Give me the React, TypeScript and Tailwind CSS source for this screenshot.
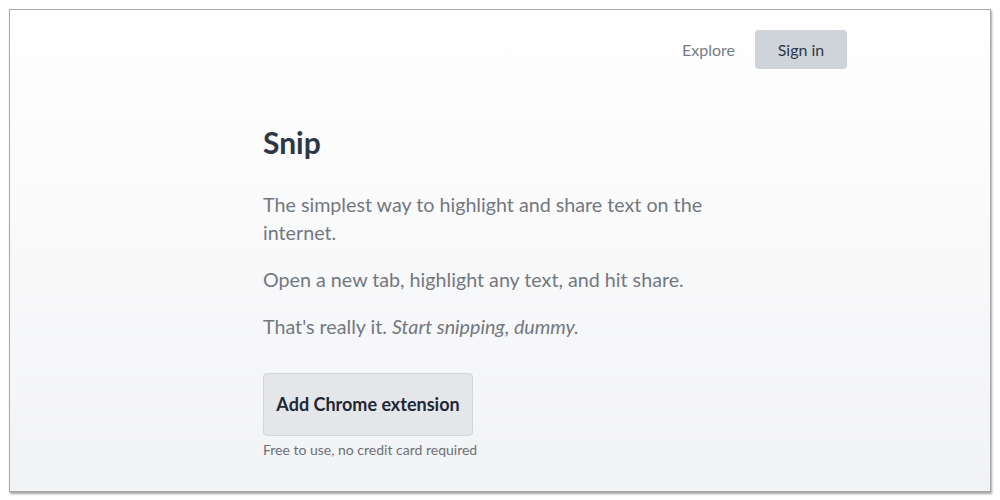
import React from "react";

export default function App() {
  return (
    <div className="w-[1000px] h-[500px] bg-white p-[9px] pb-[8px]" style={{ fontFamily: "Lato, 'Noto Sans', sans-serif" }}>
      <div className="h-full border border-[#a8a8a8] shadow-[1px_2px_2px_rgba(0,0,0,0.35)] bg-gradient-to-b from-[#ffffff] to-[#f2f3f5] flex flex-col">
        <nav className="flex justify-end items-center pt-[20px] pr-[143px]">
          <a className="text-[16px] text-[#767b84] mr-[20px]">Explore</a>
          <button className="h-[39px] w-[92px] rounded-[4px] bg-[#cfd4da] text-[16px] text-[#2d3748]">Sign in</button>
        </nav>
        <main className="pl-[253px] pt-[55px] w-[720px]">
          <h1 className="text-[30px] font-bold text-[#2d3748] leading-[36px]">Snip</h1>
          <p className="mt-[31px] text-[19.7px] leading-[28px] text-[#73787f] w-[460px]">
            The simplest way to highlight and share text on the internet.
          </p>
          <p className="mt-[19px] text-[19.7px] leading-[28px] text-[#73787f]">
            Open a new tab, highlight any text, and hit share.
          </p>
          <p className="mt-[19px] text-[19.7px] leading-[28px] text-[#73787f]">
            That's really it. <em>Start snipping, dummy.</em>
          </p>
          <button className="mt-[32px] h-[63px] px-[12px] w-[210px] rounded-[4px] bg-[#e4e6ea] border border-[#d4d7dc] text-[18px] font-bold text-[#1f2733] whitespace-nowrap">
            Add Chrome extension
          </button>
          <p className="mt-[3px] text-[14px] text-[#6b7078]">Free to use, no credit card required</p>
        </main>
      </div>
    </div>
  );
}
